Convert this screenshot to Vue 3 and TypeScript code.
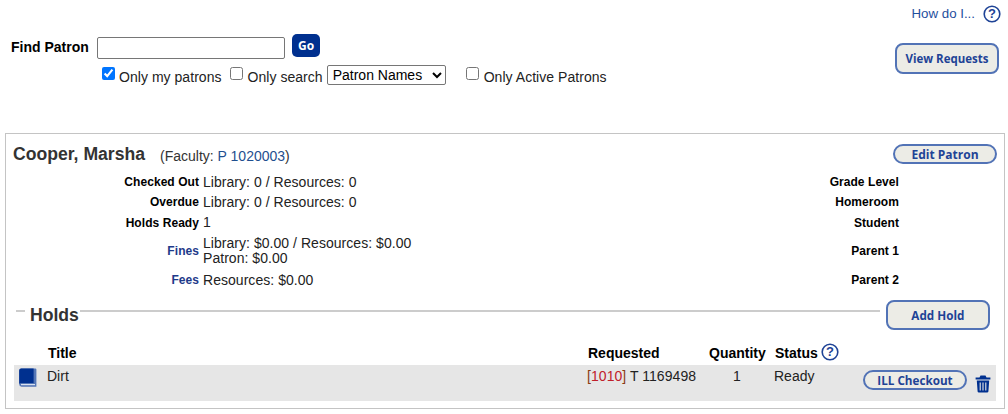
<script setup lang="ts">
interface Row { label: string; lines: string[]; link?: boolean; side: string; height: number }
const rows: Row[] = [
  { label: 'Checked Out', lines: ['Library: 0 / Resources: 0'], side: 'Grade Level', height: 20 },
  { label: 'Overdue', lines: ['Library: 0 / Resources: 0'], side: 'Homeroom', height: 20 },
  { label: 'Holds Ready', lines: ['1'], side: 'Student', height: 21 },
  { label: 'Fines', lines: ['Library: $0.00 / Resources: $0.00', 'Patron: $0.00'], link: true, side: 'Parent 1', height: 36 },
  { label: 'Fees', lines: ['Resources: $0.00'], link: true, side: 'Parent 2', height: 22 },
]
</script>

<template>
  <div class="page">
    <div class="help">
      <a class="help-link">How do I...</a>
      <svg class="q" width="18" height="18" viewBox="0 0 18 18"><circle cx="9" cy="9" r="7.8" fill="#fff" stroke="#1e4396" stroke-width="1.6"/><text x="9" y="13.4" text-anchor="middle" class="q-t">?</text></svg>
    </div>

    <div class="search">
      <div class="search-main">
        <div class="find">
          <label class="find-label">Find Patron</label>
          <input class="find-input" type="text" />
          <button class="go">Go</button>
        </div>
        <div class="opts">
          <input class="cb" type="checkbox" checked />
          <span class="opt-t first">Only my patrons</span>
          <input class="cb" type="checkbox" />
          <span class="opt-t second">Only search</span>
          <select class="sel"><option>Patron Names</option></select>
          <input class="cb third" type="checkbox" />
          <span class="opt-t">Only Active Patrons</span>
        </div>
      </div>
      <button class="btn view">View Requests</button>
    </div>

    <section class="card">
      <div class="head">
        <h2 class="name">Cooper, Marsha</h2>
        <span class="fac">(Faculty: <span class="fac-id">P 1020003</span>)</span>
        <button class="btn edit">Edit Patron</button>
      </div>

      <div class="details">
        <div v-for="r in rows" :key="r.label" class="row" :style="{ height: r.height + 'px' }">
          <span class="lab" :class="{ link: r.link }">{{ r.label }}</span>
          <span class="val"><span v-for="l in r.lines" :key="l" class="val-l">{{ l }}</span></span>
          <span class="lab side">{{ r.side }}</span>
        </div>
      </div>

      <div class="holds-head">
        <span class="rule short"></span>
        <h3 class="holds">Holds</h3>
        <span class="rule long"></span>
        <button class="btn add">Add Hold</button>
      </div>

      <div class="thead">
        <span class="c-title">Title</span>
        <span class="c-req">Requested</span>
        <span class="c-qty">Quantity</span>
        <span class="c-status">Status
          <svg class="q2" width="18" height="18" viewBox="0 0 18 18"><circle cx="9" cy="9" r="7.8" fill="#fff" stroke="#1e4396" stroke-width="1.6"/><text x="9" y="13.4" text-anchor="middle" class="q-t">?</text></svg>
        </span>
      </div>
      <div class="trow">
        <svg class="book" width="18" height="19" viewBox="0 0 18 19"><path d="M2.2 0.5H16.4a1 1 0 0 1 1 1V18.2a.5.5 0 0 1-.5.5H2.6A2.4 2.4 0 0 1 .2 16.3V2.5a2 2 0 0 1 2-2Z" fill="#5476b6"/><path d="M2.2 0.5H14.6V15H2.5c-.9 0-1.6.2-2.3.7V2.5a2 2 0 0 1 2-2Z" fill="#00308f"/><rect x="2" y="16" width="14" height="1.2" fill="#d9e1f0"/></svg>
        <span class="c-title cell">Dirt</span>
        <span class="c-req cell"><span class="br">[</span><span class="code">1010</span><span class="br">]</span> T 1169498</span>
        <span class="c-qty cell center">1</span>
        <span class="c-status cell">Ready</span>
        <button class="btn ill">ILL Checkout</button>
        <svg class="trash" width="16" height="18" viewBox="0 0 16 18"><path d="M5.5.5h5l1 2H15.4v2H.6v-2H4.5ZM1.8 5.6H14.2L13.4 16.4a1.3 1.3 0 0 1-1.3 1.1H3.9a1.3 1.3 0 0 1-1.3-1.1Z" fill="#00308f"/><path d="M5.2 7.6v7.8M8 7.6v7.8M10.8 7.6v7.8" stroke="#e6e6e6" stroke-width="1.1"/></svg>
      </div>
    </section>
  </div>
</template>

<style>
html, body { margin: 0; background: #fff; }
</style>

<style scoped>
.page { width: 1008px; height: 414px; overflow: hidden; font-family: "Liberation Sans", Arial, sans-serif; font-size: 14px; color: #222; box-sizing: border-box; }
button { margin: 0; cursor: pointer; }
.help { display: flex; justify-content: flex-end; align-items: center; height: 18px; padding: 5px 7px 0 0; }
.help-link { font-size: 13.3px; color: #1f4f9e; margin-right: 8px; position: relative; top: -1px; }
.q-t { font: bold 13px "Liberation Sans", Arial, sans-serif; fill: #1e4396; }
.search { display: flex; justify-content: space-between; height: 110px; padding: 11px 9px 0 11px; box-sizing: border-box; }
.find { display: flex; align-items: flex-start; }
.find-label { font-weight: bold; font-size: 14px; color: #000; margin-top: 5px; width: 86px; }
.find-input { width: 188px; height: 22px; box-sizing: border-box; border: 1px solid #767676; border-radius: 2px; margin: 3px 0 0; padding: 0; background: #fff; }
.go { width: 28px; height: 23px; margin-left: 7px; border: 0; border-radius: 5px; background: #00308f; color: #fff; font: bold 12px "Open Sans", sans-serif; padding: 0; }
.opts { display: flex; align-items: center; height: 20px; margin: 6px 0 0 91px; color: #222; }
.cb { width: 13px; height: 13px; margin: 0 4px 3px 0; accent-color: #0075ff; }
.opt-t { white-space: nowrap; position: relative; top: 2px; letter-spacing: 0.04px; }
.first { margin-right: 8px; }
.second { margin-right: 4px; margin-left: 1px; }
.sel { width: 119px; height: 20px; font: 14px "Liberation Sans", Arial, sans-serif; color: #000; background: #fff; border: 1px solid #767676; border-radius: 2px; padding: 0 0 0 1px; }
.third { margin-left: 20px; margin-right: 5px; }
.btn { background: #ecece6; border: 2px solid #5273b6; color: #1e4396; font: bold 11.7px "Open Sans", sans-serif; padding: 0; box-sizing: border-box; white-space: nowrap; }
.view { width: 104px; height: 31px; border-radius: 8px; margin-top: 9px; font-size: 11.5px; }
.card { margin: 0 3px 0 5px; border: 1px solid #c4c4c4; height: 276px; box-sizing: border-box; padding: 0 8px; }
.head { display: flex; align-items: flex-start; height: 38px; padding-top: 10px; box-sizing: border-box; position: relative; margin-left: -1px; }
.name { font-size: 17.6px; line-height: 21px; font-weight: bold; margin: 0; color: #333; }
.fac { margin: 3px 0 0 15px; font-size: 14px; color: #333; line-height: 18px; }
.fac-id { color: #1f4f8f; }
.edit { width: 104px; height: 20px; border-radius: 10px; margin-left: auto; margin-right: -1px; font-size: 12px; border-width: 2px; }
.details { display: flex; flex-direction: column; }
.row { display: grid; grid-template-columns: 185px 1fr 200px; column-gap: 4px; align-items: center; margin-right: 97px; }
.lab { font-size: 12px; font-weight: bold; color: #000; text-align: right; letter-spacing: 0.06px; }
.lab.link { color: #1e3a8a; }
.val { display: flex; flex-direction: column; line-height: 15px; color: #222; letter-spacing: 0.04px; }
.val-l { display: block; }
.holds-head { display: flex; align-items: flex-start; height: 41px; margin-top: 9px; position: relative; }
.rule { display: block; height: 2px; background: #ccc; margin-top: 10px; }
.short { width: 9px; margin-left: 2px; }
.holds { font-size: 17.6px; line-height: 21px; margin: 5px 1px 0 5px; font-weight: bold; color: #333; }
.long { width: 800px; }
.add { width: 104px; height: 30px; border-radius: 8px; margin: 0 0 0 6px; }
.thead { display: flex; height: 24px; align-items: center; font-size: 14px; font-weight: bold; color: #000; }
.c-title { width: 540px; margin-left: 34px; }
.c-req { width: 121px; }
.c-qty { width: 66px; white-space: nowrap; }
.c-status { width: 90px; display: flex; align-items: center; white-space: nowrap; }
.q2 { margin: -2px 0 0 3px; }
.trow { display: flex; align-items: flex-start; height: 36px; background: #e6e6e6; width: 982px; position: relative; }
.book { margin: 3px 0 0 5px; flex: none; }
.cell { font-weight: normal; margin-top: 3px; line-height: 17px; color: #222; }
.trow .c-title { margin-left: 10px; width: 540px; }
.code { color: #c0202a; }
.br { color: #8a3a10; }
.center { text-align: center; width: 52px; margin-right: 11px; margin-left: 10px; box-sizing: border-box; }
.trow .c-req { width: 114px; letter-spacing: 0.05px; }
.trow .c-status { width: 89px; }
.ill { width: 104px; height: 20px; border-radius: 10px; margin-top: 5px; background: #ecece6; }
.trash { margin: 10px 0 0 8px; flex: none; }
</style>
